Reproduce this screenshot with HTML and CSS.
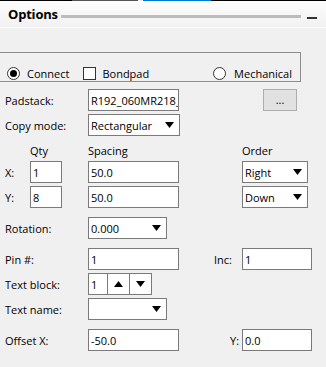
FILE: index.html
```html
<!DOCTYPE html>
<html lang="en">
<head>
    <meta charset="UTF-8">
    <title>Options</title>
    <link rel="stylesheet" href="styles.css">
</head>
<body>
    <div class="tabs">
        <span class="tab tab-dark"></span>
        <span class="tab tab-gray"></span>
        <span class="tab tab-blue"></span>
        <span class="tab tab-rest"></span>
    </div>
    <div class="titlebar">
        <span class="title">Options</span>
        <span class="grip"></span>
        <span class="minimize"></span>
    </div>

    <div class="panel">
        <div class="group">
            <span class="opt"><span class="radio checked"></span>Connect</span>
            <span class="opt opt-check"><span class="check"></span>Bondpad</span>
            <span class="opt opt-right"><span class="radio"></span>Mechanical</span>
        </div>

        <div class="row row-first">
            <span class="lbl">Padstack:</span>
            <div class="field w91">R192_060MR218_</div>
            <div class="more">...</div>
        </div>

        <div class="row gap3">
            <span class="lbl">Copy mode:</span>
            <div class="field select w92">Rectangular<svg class="arrow" width="9" height="6"><polygon points="0,0 9,0 4.5,6"/></svg></div>
        </div>

        <div class="heads">
            <span class="head-qty">Qty</span>
            <span class="head-spacing">Spacing</span>
            <span class="head-order">Order</span>
        </div>

        <div class="row">
            <span class="axis">X:</span>
            <div class="field w32">1</div>
            <div class="field w91 ml26">50.0</div>
            <div class="field select w66 ml63">Right<svg class="arrow" width="9" height="6"><polygon points="0,0 9,0 4.5,6"/></svg></div>
        </div>

        <div class="row gap3">
            <span class="axis">Y:</span>
            <div class="field w32">8</div>
            <div class="field w91 ml26">50.0</div>
            <div class="field select w66 ml63">Down<svg class="arrow" width="9" height="6"><polygon points="0,0 9,0 4.5,6"/></svg></div>
        </div>

        <div class="row gap9">
            <span class="lbl">Rotation:</span>
            <div class="field select w79">0.000<svg class="arrow" width="9" height="6"><polygon points="0,0 9,0 4.5,6"/></svg></div>
        </div>

        <div class="row gap9">
            <span class="lbl">Pin #:</span>
            <div class="field w91">1</div>
            <span class="side-lbl inc-lbl">Inc:</span>
            <div class="field w70">1</div>
        </div>

        <div class="row gap3">
            <span class="lbl">Text block:</span>
            <div class="spin">
                <span class="spin-val">1</span>
                <span class="spin-btn"><svg width="9" height="6"><polygon points="4.5,0 9,6 0,6"/></svg></span>
                <span class="spin-btn"><svg width="9" height="6"><polygon points="0,0 9,0 4.5,6"/></svg></span>
            </div>
        </div>

        <div class="row gap3">
            <span class="lbl">Text name:</span>
            <div class="field select w79"><svg class="arrow" width="9" height="6"><polygon points="0,0 9,0 4.5,6"/></svg></div>
        </div>

        <div class="row gap9">
            <span class="lbl">Offset X:</span>
            <div class="field w91">-50.0</div>
            <span class="side-lbl y-lbl">Y:</span>
            <div class="field w70">0.0</div>
        </div>
    </div>
</body>
</html>
```

FILE: styles.css
```css
body {
    margin: 0;
    background-color: #f0f0f0;
    color: #000;
    font-family: "Open Sans", "Noto Sans", sans-serif;
    font-size: 11px;
    width: 326px;
    height: 367px;
    overflow: hidden;
}
.tabs {
    display: flex;
    height: 1px;
}
.tab-dark { width: 72px; background: #000; }
.tab-gray { width: 66px; background: #555; margin-right: 5px; }
.tab-blue { width: 68px; background: #0078d7; }
.tab-rest { flex: 1; background: #000; }
.titlebar {
    display: flex;
    align-items: center;
    height: 26px;
    border-bottom: 1px solid #fdfdfd;
    background: linear-gradient(#fdfdfd, #f1f1f1);
    padding-left: 8px;
}
.title {
    font-weight: bold;
    font-size: 13px;
    letter-spacing: -0.2px;
    margin-top: -1px;
}
.grip {
    flex: 1;
    height: 3px;
    background: #bcbcbc;
    margin-left: 3px;
    margin-top: 4px;
}
.minimize {
    width: 10px;
    height: 2px;
    background: #333;
    margin: 8px 9px 0 6px;
}
.panel {
    padding-left: 5px;
}
.group {
    display: flex;
    align-items: center;
    box-sizing: border-box;
    width: 302px;
    height: 30px;
    margin: 24px 0 0 -6px;
    padding: 13px 8px 0 7px;
    border: 1px solid #8c8c8c;
    border-left-color: transparent;
}
.opt {
    display: flex;
    align-items: center;
    height: 13px;
    gap: 7px;
}
.opt-check {
    margin-left: 14px;
    gap: 6px;
}
.opt-right {
    margin-left: auto;
    gap: 8px;
}
.radio {
    box-sizing: border-box;
    width: 13px;
    height: 13px;
    border: 1px solid #333;
    border-radius: 50%;
    background: #fff;
    display: flex;
    align-items: center;
    justify-content: center;
}
.radio.checked::after {
    content: "";
    width: 7px;
    height: 7px;
    border-radius: 50%;
    background: #000;
}
.check {
    box-sizing: border-box;
    width: 13px;
    height: 13px;
    border: 1px solid #333;
    background: #fff;
}
.row {
    display: flex;
    align-items: center;
    height: 22px;
}
.row-first { margin-top: 7px; }
.gap3 { margin-top: 3px; }
.gap9 { margin-top: 9px; }
.lbl {
    width: 83px;
}
.axis {
    width: 25px;
}
.field {
    box-sizing: border-box;
    height: 22px;
    display: flex;
    align-items: center;
    padding-left: 2px;
    background: #fff;
    border: 1px solid #7a7a7a;
    white-space: nowrap;
    overflow: hidden;
}
.select {
    padding-right: 5px;
}
.arrow {
    flex: none;
    margin-left: auto;
}
.w32 { width: 32px; }
.w66 { width: 66px; }
.w70 { width: 70px; }
.w79 { width: 79px; }
.w91 { width: 91px; }
.w92 { width: 92px; }
.ml26 { margin-left: 26px; }
.ml63 { margin-left: 63px; }
.more {
    box-sizing: border-box;
    width: 34px;
    height: 22px;
    margin-left: 84px;
    background: #e1e1e1;
    border: 1px solid #adadad;
    display: flex;
    justify-content: center;
    align-items: center;
    padding-bottom: 2px;
}
.heads {
    display: flex;
    box-sizing: border-box;
    height: 25px;
    padding-top: 7px;
}
.head-qty { margin-left: 25px; width: 58px; }
.head-spacing { width: 154px; }
.inc-lbl {
    width: 28px;
    margin-left: 35px;
}
.y-lbl {
    width: 12px;
    margin-left: 51px;
}
.spin {
    display: flex;
    box-sizing: border-box;
    height: 22px;
    width: 64px;
    border: 1px solid #7a7a7a;
    background: #fff;
}
.spin-val {
    width: 19px;
    padding-left: 2px;
    box-sizing: border-box;
    display: flex;
    align-items: center;
    border-right: 1px solid #7a7a7a;
}
.spin-btn {
    width: 21px;
    display: flex;
    align-items: center;
    justify-content: center;
}
.spin-btn + .spin-btn {
    border-left: 1px solid #7a7a7a;
}
```
